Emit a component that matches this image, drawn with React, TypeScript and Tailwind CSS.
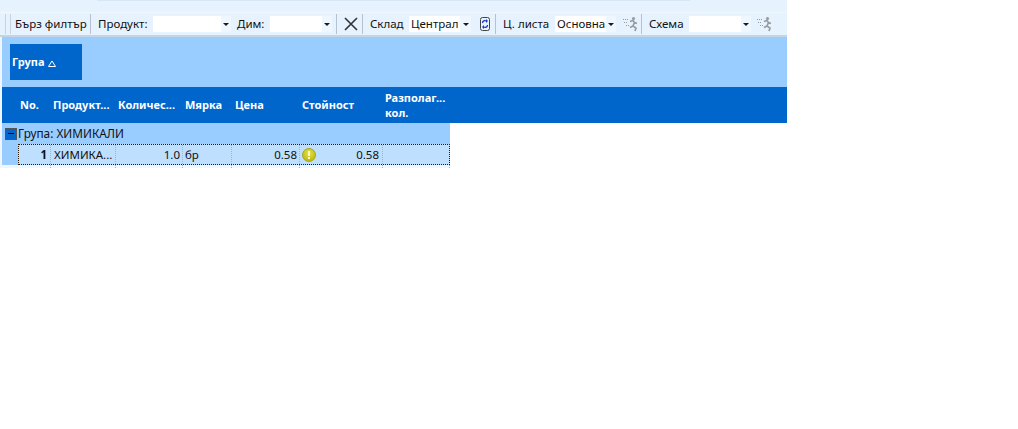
const Sep = () => <div className="w-px h-[20px] bg-[#b4c2ce] shrink-0" />;

const Arrow = () => (
  <svg width="6" height="3" viewBox="0 0 6 3" className="shrink-0">
    <path d="M0 0h6L3 3z" fill="#1a1a1a" />
  </svg>
);

const Combo = ({ w, text, drop = 10 }: { w: number; text?: string; drop?: number }) => (
  <div className="flex h-4 shrink-0" style={{ width: w }}>
    <div className="flex-1 bg-white flex items-center pl-[2px] text-[11.5px] text-[#111] leading-none whitespace-nowrap overflow-hidden">
      {text}
    </div>
    <div className="flex items-center justify-center bg-[#eef7ff]" style={{ width: drop }}>
      <Arrow />
    </div>
  </div>
);

const Runner = () => (
  <svg width="15" height="16" viewBox="0 0 15 16" className="shrink-0" fill="none" stroke="#969ca0">
    <path d="M0 3.5h5M1 6.5h4M3 9.5h3" strokeWidth="1" strokeDasharray="1 1" />
    <circle cx="10.5" cy="2.5" r="1.6" fill="#969ca0" stroke="none" />
    <path d="M7 5.5l3-1 1.5 2-1.5 3.5 3 2-1 3M10 10l-3 1.5M11.5 6.5l2.5 1" strokeWidth="1.7" />
  </svg>
);

const Refresh = () => (
  <svg width="10" height="14" viewBox="0 0 10 14" className="shrink-0" fill="none">
    <rect x="0.5" y="0.5" width="9" height="13" rx="2" stroke="#444" />
    <path d="M2.5 6c0-2 2-3 4-2M7.5 8c0 2-2 3-4 2" stroke="#1d35c9" strokeWidth="1.3" />
    <path d="M6 2l2 2-2 2zM4 8l-2 2 2 2z" fill="#1d35c9" />
  </svg>
);

const Warning = () => (
  <div className="w-[14px] h-[14px] rounded-full bg-[radial-gradient(circle_at_50%_35%,#e4e44a,#b5ae00)] border border-[#a8a810] flex items-center justify-center shrink-0">
    <div className="flex flex-col items-center gap-px">
      <div className="w-[2px] h-[5px] bg-[#f7f7d8]" />
      <div className="w-[2px] h-[2px] bg-[#f7f7d8]" />
    </div>
  </div>
);

const columns = [
  { w: "w-[48px]", label: "No.", cls: "pl-[18px]" },
  { w: "w-[66px]", label: "Продукт...", cls: "pl-[3px]" },
  { w: "w-[67px]", label: "Количес...", cls: "pl-[2px]" },
  { w: "w-[49px]", label: "Мярка", cls: "pl-[2px]" },
  { w: "w-[67px]", label: "Цена", cls: "pl-[3px]" },
  { w: "w-[83px]", label: "Стойност", cls: "pl-[3px]" },
];

const cellLine = "border-r border-dotted border-[#7fbdf5]";

export default function App() {
  return (
    <div className="w-[787px] [font-family:'Noto_Sans',sans-serif] text-[11.5px]">
      <div className="h-[13px] bg-[#e6f3fe] flex border-b border-[#f0f8ff]">
        <div className="ml-[97px] w-[593px] h-px bg-[#d6e6f4]" />
      </div>

      <div className="h-[24px] bg-[#e6f3fe] border-b-2 border-[#c3d5e4] flex items-center text-[#111] whitespace-nowrap">
        <div className="w-[6px] ml-[5px] h-[20px] border-x border-[#c9d3dc] shrink-0" />
        <span className="ml-[4px] w-[75px]">Бърз филтър</span>
        <Sep />
        <span className="ml-[7px] w-[55px]">Продукт:</span>
        <Combo w={78} />
        <span className="ml-[6px] w-[33px]">Дим:</span>
        <Combo w={62} />
        <div className="ml-[4px]"><Sep /></div>
        <svg width="14" height="14" viewBox="0 0 14 14" className="ml-[7px] shrink-0" stroke="#333" strokeWidth="1.6">
          <path d="M1 1l12 12M13 1L1 13" />
        </svg>
        <div className="ml-[4px]"><Sep /></div>
        <span className="ml-[7px] w-[39px]">Склад</span>
        <Combo w={62} text="Централ" drop={11} />
        <div className="ml-[9px]"><Refresh /></div>
        <div className="ml-[5px]"><Sep /></div>
        <span className="ml-[7px] w-[52px]">Ц. листа</span>
        <Combo w={61} text="Основна" />
        <div className="ml-[7px]"><Runner /></div>
        <div className="ml-[3px]"><Sep /></div>
        <span className="ml-[7px] w-[40px]">Схема</span>
        <Combo w={62} />
        <div className="ml-[6px]"><Runner /></div>
      </div>

      <div className="border-l-2 border-[#eef7ff]">
        <div className="h-[50px] bg-[#99ccff] pl-[8px] pt-[7px]">
          <div className="w-[72px] h-[36px] bg-[#0066cc] text-white font-bold text-[11px] flex items-center pl-[2px] gap-[3px]">
            Група
            <svg width="8" height="7" viewBox="0 0 8 7" fill="none" stroke="#fff" className="mt-[2px]">
              <path d="M4 1L7.5 6.5H.5z" />
            </svg>
          </div>
        </div>

        <div className="h-[36px] bg-[#0066cc] text-white font-bold text-[11px] flex items-center">
          {columns.map((c) => (
            <div key={c.label} className={`${c.w} ${c.cls} whitespace-nowrap`}>
              {c.label}
            </div>
          ))}
          <div className="pl-[3px] leading-[15px]">
            Разполаг...
            <br />
            кол.
          </div>
        </div>

        <div className="w-[448px] h-[21px] bg-[#99ccff] flex items-center pl-[3px] text-[#111] text-[11.8px]">
          <div className="w-[12px] h-[12px] bg-[#0066cc] border border-[#555] flex items-center justify-center shrink-0">
            <div className="w-[6px] h-px bg-black" />
          </div>
          <span className="ml-[1px]">Група: ХИМИКАЛИ</span>
        </div>

        <div className="w-[448px] flex h-[21px]">
          <div className="w-[16px] bg-[#99ccff] shrink-0" />
          <div className="flex-1 bg-[#bfdfff] border border-dotted border-[#2a1a0a] text-[#111] flex items-center">
            <div className={`w-[32px] h-full pr-[3px] font-bold ${cellLine} flex items-center justify-end`}>1</div>
            <div className={`w-[65px] h-full pl-[3px] ${cellLine} flex items-center`}>ХИМИКА...</div>
            <div className={`w-[67px] h-full pr-[2px] ${cellLine} flex items-center justify-end`}>1.0</div>
            <div className={`w-[49px] h-full pl-[2px] ${cellLine} flex items-center`}>бр</div>
            <div className={`w-[68px] h-full pr-[2px] ${cellLine} flex items-center justify-end`}>0.58</div>
            <div className={`w-[83px] h-full pl-[2px] pr-[3px] ${cellLine} flex items-center justify-between`}>
              <Warning />
              <span>0.58</span>
            </div>
          </div>
        </div>

        <div className="w-[448px] h-[3px] bg-[#eef7ff] flex pl-[17px]">
          <div className={`w-[32px] ${cellLine}`} />
          <div className={`w-[65px] ${cellLine}`} />
          <div className={`w-[67px] ${cellLine}`} />
          <div className={`w-[49px] ${cellLine}`} />
          <div className={`w-[68px] ${cellLine}`} />
          <div className={`w-[83px] ${cellLine}`} />
          <div className={`w-[67px] ${cellLine}`} />
        </div>
      </div>
    </div>
  );
}
